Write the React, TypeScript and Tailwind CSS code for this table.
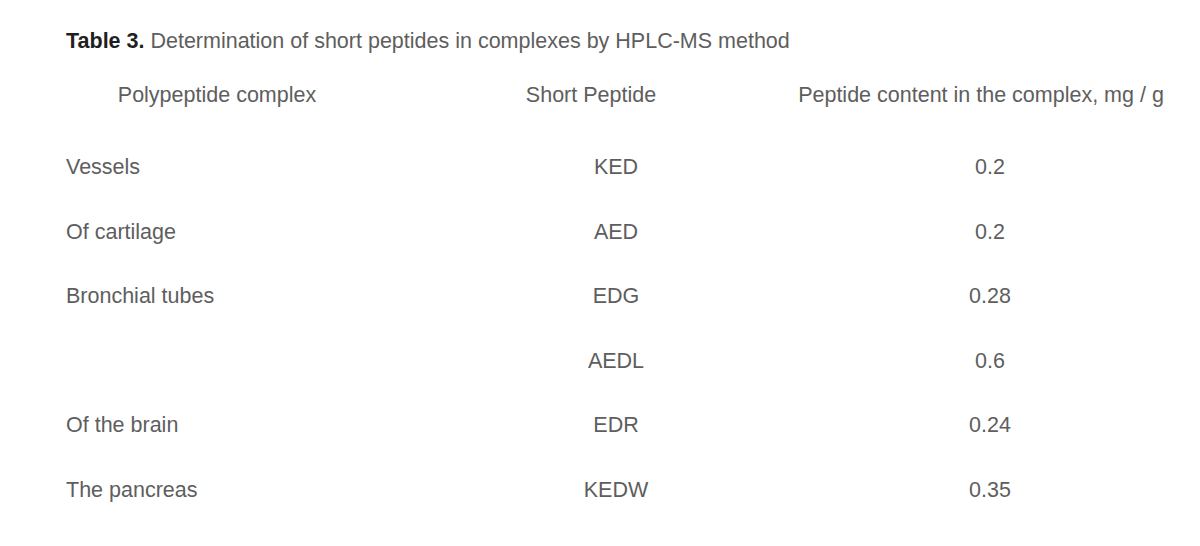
const rows = [
  { complex: "Vessels", peptide: "KED", content: "0.2" },
  { complex: "Of cartilage", peptide: "AED", content: "0.2" },
  { complex: "Bronchial tubes", peptide: "EDG", content: "0.28" },
  { complex: "", peptide: "AEDL", content: "0.6" },
  { complex: "Of the brain", peptide: "EDR", content: "0.24" },
  { complex: "The pancreas", peptide: "KEDW", content: "0.35" }
];

export default function App() {
  return (
    <div
      className="h-[546px] w-[1200px] bg-white pl-[66px] pt-[28px] text-[21.5px] text-[#5e5e5e]"
      style={{ fontFamily: '"Liberation Sans", Arial, sans-serif' }}
    >
      <p className="h-[26px] whitespace-nowrap leading-[26px]">
        <span className="font-bold text-[#1f1f1f]">Table 3.</span> Determination of short peptides in complexes by HPLC-MS method
      </p>
      <div className="mt-[28px] flex h-[26px] leading-[26px]">
        <div className="flex w-[302px] justify-center whitespace-nowrap">Polypeptide complex</div>
        <div className="flex w-[446px] justify-center whitespace-nowrap">Short Peptide</div>
        <div className="flex w-[334px] justify-center whitespace-nowrap">Peptide content in the complex, mg / g</div>
      </div>
      <div className="mt-[46px] flex flex-col gap-[38.6px]">
        {rows.map((row) => (
          <div key={row.peptide} className="flex h-[26px] leading-[26px]">
            <div className="w-[302px] whitespace-nowrap">{row.complex}</div>
            <div className="flex w-[446px] justify-center pl-[50px]">{row.peptide}</div>
            <div className="flex w-[334px] justify-center pl-[18px]">{row.content}</div>
          </div>
        ))}
      </div>
    </div>
  );
}
